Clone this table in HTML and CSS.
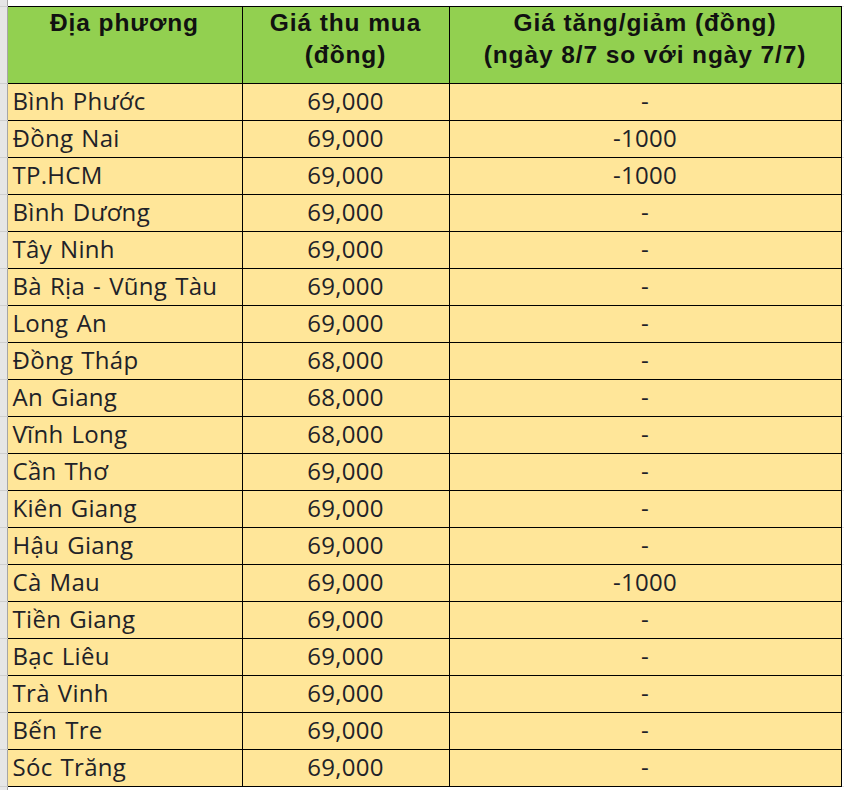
FILE: index.html
```html
<!DOCTYPE html>
<html lang="vi">
<head>
<meta charset="utf-8">
<link rel="stylesheet" href="styles.css">
</head>
<body>
<table class="sheet">
  <colgroup>
    <col class="c-rh"><col class="c-1"><col class="c-2"><col class="c-3"><col class="c-gap">
  </colgroup>
  <tr class="top"><td class="rh"></td><td class="blank" colspan="3"></td><td class="gap"></td></tr>
  <tr class="head">
    <td class="rh"></td>
    <th>Địa phương</th>
    <th>Giá thu mua<br>(đồng)</th>
    <th>Giá tăng/giảm (đồng)<br>(ngày 8/7 so với ngày 7/7)</th>
    <td class="gap"></td>
  </tr>
  <tr><td class="rh"></td><td class="name">Bình Phước</td><td class="num">69,000</td><td class="chg">-</td><td class="gap"></td></tr>
  <tr><td class="rh"></td><td class="name">Đồng Nai</td><td class="num">69,000</td><td class="chg">-1000</td><td class="gap"></td></tr>
  <tr><td class="rh"></td><td class="name">TP.HCM</td><td class="num">69,000</td><td class="chg">-1000</td><td class="gap"></td></tr>
  <tr><td class="rh"></td><td class="name">Bình Dương</td><td class="num">69,000</td><td class="chg">-</td><td class="gap"></td></tr>
  <tr><td class="rh"></td><td class="name">Tây Ninh</td><td class="num">69,000</td><td class="chg">-</td><td class="gap"></td></tr>
  <tr><td class="rh"></td><td class="name">Bà Rịa - Vũng Tàu</td><td class="num">69,000</td><td class="chg">-</td><td class="gap"></td></tr>
  <tr><td class="rh"></td><td class="name">Long An</td><td class="num">69,000</td><td class="chg">-</td><td class="gap"></td></tr>
  <tr><td class="rh"></td><td class="name">Đồng Tháp</td><td class="num">68,000</td><td class="chg">-</td><td class="gap"></td></tr>
  <tr><td class="rh"></td><td class="name">An Giang</td><td class="num">68,000</td><td class="chg">-</td><td class="gap"></td></tr>
  <tr><td class="rh"></td><td class="name">Vĩnh Long</td><td class="num">68,000</td><td class="chg">-</td><td class="gap"></td></tr>
  <tr><td class="rh"></td><td class="name">Cần Thơ</td><td class="num">69,000</td><td class="chg">-</td><td class="gap"></td></tr>
  <tr><td class="rh"></td><td class="name">Kiên Giang</td><td class="num">69,000</td><td class="chg">-</td><td class="gap"></td></tr>
  <tr><td class="rh"></td><td class="name">Hậu Giang</td><td class="num">69,000</td><td class="chg">-</td><td class="gap"></td></tr>
  <tr><td class="rh"></td><td class="name">Cà Mau</td><td class="num">69,000</td><td class="chg">-1000</td><td class="gap"></td></tr>
  <tr><td class="rh"></td><td class="name">Tiền Giang</td><td class="num">69,000</td><td class="chg">-</td><td class="gap"></td></tr>
  <tr><td class="rh"></td><td class="name">Bạc Liêu</td><td class="num">69,000</td><td class="chg">-</td><td class="gap"></td></tr>
  <tr><td class="rh"></td><td class="name">Trà Vinh</td><td class="num">69,000</td><td class="chg">-</td><td class="gap"></td></tr>
  <tr><td class="rh"></td><td class="name">Bến Tre</td><td class="num">69,000</td><td class="chg">-</td><td class="gap"></td></tr>
  <tr><td class="rh"></td><td class="name">Sóc Trăng</td><td class="num">69,000</td><td class="chg">-</td><td class="gap"></td></tr>
  <tr class="bottom"><td class="rh"></td><td class="blank" colspan="3"></td><td class="gap"></td></tr>
</table>
</body>
</html>
```
FILE: styles.css
```css
html, body {
  margin: 0;
  padding: 0;
  background: #ffffff;
  overflow: hidden;
}
.sheet {
  border-collapse: collapse;
  table-layout: fixed;
  width: 844px;
  font-family: "Open Sans", "Liberation Sans", sans-serif;
  color: #1e2228;
}
.c-rh { width: 7px; }
.c-1 { width: 235px; }
.c-2 { width: 207px; }
.c-3 { width: 392px; }
.c-gap { width: 3px; }

td, th {
  padding: 0;
}
.rh {
  background: #e6e6e6;
  border-right: 1px solid #a6a6a6;
  border-bottom: 1px solid #cfcfcf;
}
.gap {
  background: #ffffff;
  border-right: 1px solid #dadada;
  border-bottom: 1px solid #e4e4e4;
}
.top td { height: 6px; }
.top .blank { background: #ffffff; border-bottom: 1px solid #000; }
.bottom td { height: 10px; }
.bottom .blank { background: #ffffff; }

.head th {
  height: 76px;
  background: #92d050;
  border: 1px solid #000;
  font-family: "Liberation Sans", Arial, sans-serif;
  font-weight: bold;
  font-size: 24.5px;
  letter-spacing: 0.9px;
  line-height: 32px;
  color: #111111;
  text-align: center;
  vertical-align: top;
}
.head th:nth-child(2) { border-left: none; }

.name, .num, .chg {
  height: 31px;
  background: #ffe699;
  border: 1px solid #000;
  font-size: 24px;
  letter-spacing: 0.3px;
  word-spacing: 1.5px;
  line-height: 28px;
  vertical-align: bottom;
  padding-bottom: 5px;
}
.name {
  border-left: none;
  padding-left: 5px;
  text-align: left;
}
.num, .chg { text-align: center; }
```
